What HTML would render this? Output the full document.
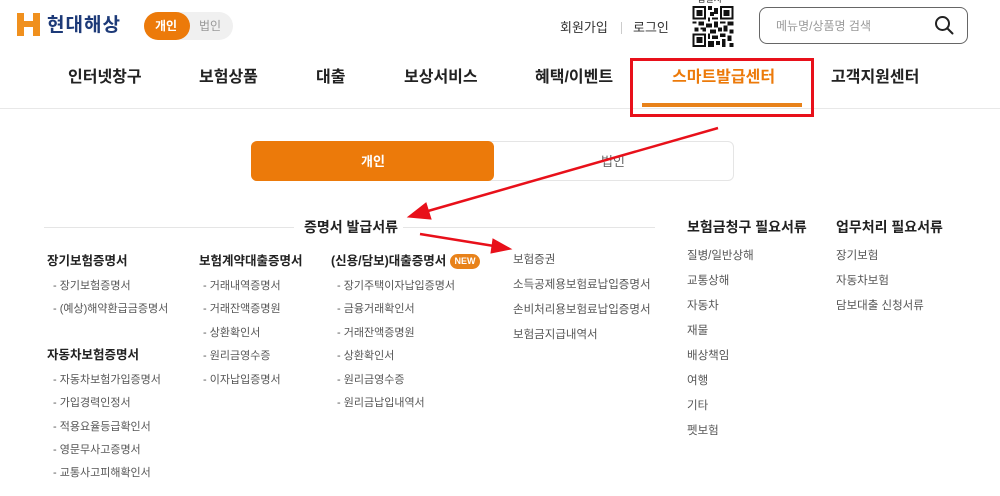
<!DOCTYPE html>
<html><head><meta charset="utf-8">
<style>
*{margin:0;padding:0;box-sizing:border-box}
body{width:1000px;height:496px;background:#fff;position:relative;overflow:hidden;font-family:"Liberation Sans","Noto Sans CJK KR",sans-serif;color:#222}
.t{position:absolute;white-space:nowrap;line-height:1}
.nav{font-size:16px;font-weight:bold;color:#222;top:70px}
.h{font-size:12.5px;font-weight:bold;color:#222}
.i{font-size:11px;color:#555}
.g{font-size:11.5px;color:#555}
</style></head><body>
<svg style="position:absolute;left:17px;top:13px" width="24" height="23" viewBox="0 0 24 23">
<path d="M0 0h7v8h9V0h7v23h-7v-9H7v9H0z" fill="#f0901e"/>
</svg>
<div class="t" style="left:47px;top:16px;font-size:19px;font-weight:bold;color:#1d3a78;letter-spacing:1px">현대해상</div>
<div style="position:absolute;left:144px;top:12px;width:89px;height:28px;border-radius:14px;background:#f0f0f0"></div>
<div style="position:absolute;left:144px;top:12px;width:46px;height:28px;border-radius:14px;background:#ec7a0a"></div>
<div class="t" style="left:155px;top:20px;font-size:12px;font-weight:bold;color:#fff">개인</div>
<div class="t" style="left:199px;top:20px;font-size:12px;color:#999">법인</div>

<div class="t" style="left:560px;top:21px;font-size:13px;color:#333">회원가입</div>
<div style="position:absolute;left:621px;top:22px;width:1px;height:12px;background:#ccc"></div>
<div class="t" style="left:633px;top:21px;font-size:13px;color:#333">로그인</div>
<div class="t" style="left:697px;top:-5px;font-size:9px;color:#333">앱설치</div>
<svg style="position:absolute;left:692px;top:6px" width="42" height="41" viewBox="0 0 21 21" shape-rendering="crispEdges">
<g fill="#111"><path d="M0 0h7v7H0zM14 0h7v7h-7zM0 14h7v7H0z"/></g>
<g fill="#fff"><path d="M1 1h5v5H1zM15 1h5v5h-5zM1 15h5v5H1z"/></g>
<g fill="#111"><path d="M2 2h3v3H2zM16 2h3v3h-3zM2 16h3v3H2z"/>
<path d="M8 0h2v2H8zM11 1h2v3h-2zM9 3h2v2H9zM8 6h1v2H8zM10 6h3v1h-3zM0 8h2v1H0zM3 8h3v2H3zM7 9h3v2H7zM11 8h2v3h-2zM14 8h3v1h-3zM18 8h3v2h-3zM1 11h2v2H1zM4 11h3v1H4zM9 12h3v2H9zM13 11h2v2h-2zM16 10h2v3h-2zM19 12h2v2h-2zM8 14h1v3H8zM10 15h3v2h-3zM14 14h3v2h-3zM18 15h2v3h-2zM8 18h3v3H8zM12 18h2v2h-2zM15 17h2v4h-2zM19 19h2v2h-2zM5 12h2v1H5z"/></g>
</svg>
<div style="position:absolute;left:759px;top:7px;width:209px;height:37px;border:1px solid #666;border-radius:8px"></div>
<div class="t" style="left:776px;top:20px;font-size:12px;color:#999">메뉴명/상품명 검색</div>
<svg style="position:absolute;left:934px;top:15px" width="20" height="20" viewBox="0 0 20 20"><circle cx="8.5" cy="8.5" r="6.5" fill="none" stroke="#222" stroke-width="2"/><path d="M13.5 13.5l5 5" stroke="#222" stroke-width="2" stroke-linecap="round"/></svg>

<div class="t nav" style="left:68px">인터넷창구</div>
<div class="t nav" style="left:199px">보험상품</div>
<div class="t nav" style="left:316px">대출</div>
<div class="t nav" style="left:404px">보상서비스</div>
<div class="t nav" style="left:535px">혜택/이벤트</div>
<div class="t nav" style="left:672px;color:#ec7a0a">스마트발급센터</div>
<div class="t nav" style="left:831px">고객지원센터</div>
<div style="position:absolute;left:0;top:108px;width:1000px;height:1px;background:#e8e8e8"></div>
<div style="position:absolute;left:642px;top:103px;width:160px;height:4px;background:#e8821a"></div>
<div style="position:absolute;left:630px;top:58px;width:184px;height:59px;border:3px solid #e8101a"></div>

<div style="position:absolute;left:251px;top:141px;width:483px;height:40px;border:1px solid #e5e5e5;border-radius:6px"></div>
<div style="position:absolute;left:251px;top:141px;width:243px;height:40px;background:#ec7a0a;border-radius:6px"></div>
<div class="t" style="left:361px;top:155px;font-size:13px;font-weight:bold;color:#fff">개인</div>
<div class="t" style="left:601px;top:155px;font-size:13px;color:#666">법인</div>

<div style="position:absolute;left:44px;top:227px;width:250px;height:1px;background:#e5e5e5"></div>
<div style="position:absolute;left:403px;top:227px;width:252px;height:1px;background:#e5e5e5"></div>
<div class="t" style="left:304px;top:220px;font-size:14px;font-weight:bold">증명서 발급서류</div>
<div class="t" style="left:687px;top:220px;font-size:14px;font-weight:bold">보험금청구 필요서류</div>
<div class="t" style="left:836px;top:220px;font-size:14px;font-weight:bold">업무처리 필요서류</div>

<div class="t h" style="left:47px;top:255px">장기보험증명서</div>
<div class="t i" style="left:53px;top:281px">- 장기보험증명서</div>
<div class="t i" style="left:53px;top:304px">- (예상)해약환급금증명서</div>
<div class="t h" style="left:47px;top:349px">자동차보험증명서</div>
<div class="t i" style="left:53px;top:375px">- 자동차보험가입증명서</div>
<div class="t i" style="left:53px;top:398px">- 가입경력인정서</div>
<div class="t i" style="left:53px;top:422px">- 적용요율등급확인서</div>
<div class="t i" style="left:53px;top:445px">- 영문무사고증명서</div>
<div class="t i" style="left:53px;top:468px">- 교통사고피해확인서</div>
<div class="t h" style="left:199px;top:255px">보험계약대출증명서</div>
<div class="t i" style="left:203px;top:281px">- 거래내역증명서</div>
<div class="t i" style="left:203px;top:304px">- 거래잔액증명원</div>
<div class="t i" style="left:203px;top:328px">- 상환확인서</div>
<div class="t i" style="left:203px;top:351px">- 원리금영수증</div>
<div class="t i" style="left:203px;top:375px">- 이자납입증명서</div>
<div class="t h" style="left:331px;top:255px">(신용/담보)대출증명서</div>
<div style="position:absolute;left:450px;top:254px;width:30px;height:15px;border-radius:8px;background:#e8821a;color:#fff;font-size:9px;font-weight:bold;line-height:15px;text-align:center">NEW</div>
<div class="t i" style="left:337px;top:281px">- 장기주택이자납입증명서</div>
<div class="t i" style="left:337px;top:304px">- 금융거래확인서</div>
<div class="t i" style="left:337px;top:328px">- 거래잔액증명원</div>
<div class="t i" style="left:337px;top:351px">- 상환확인서</div>
<div class="t i" style="left:337px;top:375px">- 원리금영수증</div>
<div class="t i" style="left:337px;top:398px">- 원리금납입내역서</div>
<div class="t g" style="left:513px;top:255px">보험증권</div>
<div class="t g" style="left:513px;top:280px">소득공제용보험료납입증명서</div>
<div class="t g" style="left:513px;top:305px">손비처리용보험료납입증명서</div>
<div class="t g" style="left:513px;top:330px">보험금지급내역서</div>
<div class="t g" style="left:687px;top:251px">질병/일반상해</div>
<div class="t g" style="left:687px;top:276px">교통상해</div>
<div class="t g" style="left:687px;top:301px">자동차</div>
<div class="t g" style="left:687px;top:326px">재물</div>
<div class="t g" style="left:687px;top:351px">배상책임</div>
<div class="t g" style="left:687px;top:376px">여행</div>
<div class="t g" style="left:687px;top:401px">기타</div>
<div class="t g" style="left:687px;top:426px">펫보험</div>
<div class="t g" style="left:836px;top:251px">장기보험</div>
<div class="t g" style="left:836px;top:276px">자동차보험</div>
<div class="t g" style="left:836px;top:301px">담보대출 신청서류</div>

<svg style="position:absolute;left:0;top:0" width="1000" height="496" viewBox="0 0 1000 496">
<g fill="#e8101a" stroke="#e8101a">
<line x1="718" y1="128" x2="428" y2="211" stroke-width="2.5"/>
<path d="M408 217 L426 203 L431 219 Z" stroke-width="1"/>
<line x1="420" y1="234" x2="494" y2="246" stroke-width="2.5"/>
<path d="M511 249 L493 239 L491 253 Z" stroke-width="1"/>
</g>
</svg>
</body></html>
